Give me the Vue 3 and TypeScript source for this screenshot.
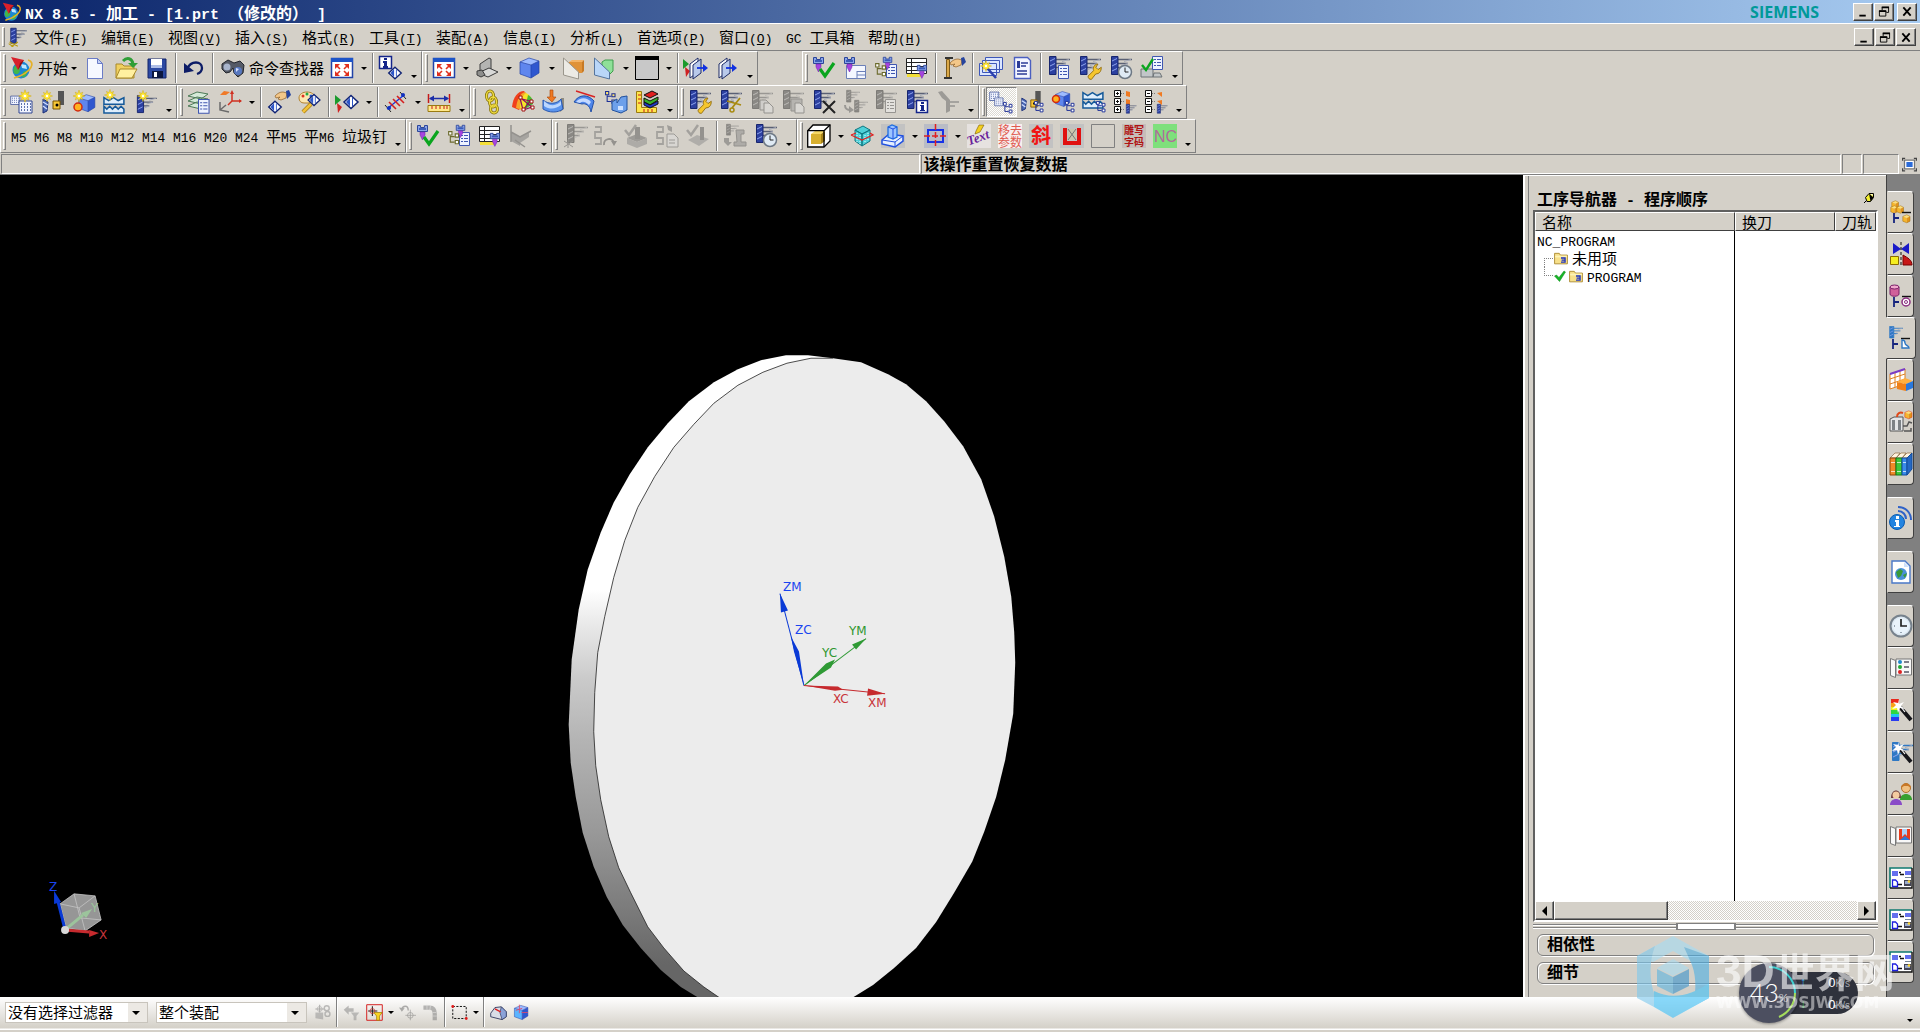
<script setup lang="ts">
import { h } from 'vue'

/* Text helper: western characters are set in a monospaced face, the access key is underlined. */
const Label = (props: { text: string }) =>
  h(
    'span',
    props.text.split(/([\x20-\x7e]+)/).filter(Boolean).map((part) => {
      if (!/^[\x20-\x7e]/.test(part)) return part
      const key = part.match(/^\((.)\)$/)
      return h('span', { class: 'latin' }, key ? ['(', h('u', key[1]), ')'] : part)
    }),
  )
Label.props = ['text']

const cellWidth = (text: string) =>
  [...text].reduce((sum, c) => sum + (c.charCodeAt(0) < 128 ? 8 : 15), 0) + 'px'

/* ---- icon parts, drawn in a 24 x 24 box ---- */
const at = (part: string, x: number, y: number, s = 1) => `<g transform="translate(${x} ${y}) scale(${s})">${part}</g>`

const mill =
  '<path stroke="#5a6074" stroke-width="1.4" d="M9 3.5h14M9 7.5h10M9 11.5h6"/><path stroke="#a4a9b8" d="M15 5.500l7-2M12 9.500l7-2M10 13.500l5-2"/><path fill="#2c40a0" stroke="#18266e" d="M2.500.500h6.500v18H2.500z"/><path stroke="#8fa4ee" stroke-width="1" d="M3 5l5-2.500M3 10l5-2.500M3 15l5-2.500"/>'
const star =
  '<path fill="#ffe838" stroke="#c9a200" stroke-width=".5" d="M0-7L1.3-3 4.5-4.5 3-1.3 7 0 3 1.3 4.5 4.5 1.3 3 0 7-1.3 3-4.5 4.5-3 1.3-7 0-3-1.3-4.5-4.5-1.3-3z"/><circle r="1.5" fill="#fff"/>'
const holder =
  '<path fill="#8aa4ea" stroke="#2c469a" d="M1.5 1.5h3v2h4v-2h3v6h-10z"/><path fill="#3a5cb8" d="M3 4h7v2H3z"/><path fill="#a545e0" stroke="#6a1fa0" stroke-width=".5" d="M4 8h5v3l-2.5 5L4 11z"/>'
const check = '<path fill="none" stroke="#0aa51e" stroke-width="3.2" d="M8 13l5 7L22 7"/>'
const tree = '<path fill="#fff" stroke="#1c2e96" d="M1.5 1.5h3v3h-3zM7.5 3.5h3v3h-3zM7.5 9.5h3v3h-3z"/><path fill="none" stroke="#1c2e96" d="M3 5v6h4M3 6h4"/>'
const clock = '<circle r="6.5" fill="#dfeaf4" stroke="#6d7884" stroke-width="1.5"/><path fill="none" stroke="#222" d="M0-4.5V0h3.5"/>'
const wrench = '<path fill="#f5c62e" stroke="#8f6a0c" stroke-width=".8" d="M1 11l5-5c-1-3 1-6 4-6L8 3l2 2 3-2c0 4-2 6-5 6l-4 5c-2 0-3-1-3-3z"/>'
const sheet = '<path fill="#eef3ff" stroke="#4057b0" d="M.5.5h10v13H.5z"/><path stroke="#4057b0" d="M2 3.5h2M5 3.5h4M2 6.5h2M5 6.5h4M2 9.5h2M5 9.5h4"/>'
const gem = '<path fill="#fff" stroke="#0f2274" stroke-width="1.5" d="M0-6.5L7 0 0 6.5-7 0z"/><path fill="#2c55c8" d="M-1-4.500V4.500L-5 0zM1-4V4L2 4V-4z"/>'
const wand = '<path stroke="#15151a" stroke-width="4" d="M11 9l11 13"/><path stroke="#fff" stroke-width="1.2" d="M12 9l4 5"/><path fill="#fff" d="M9 1l1 5 5-2-3 4 4 3-5-1-2 5-1-5-5 1 4-4-3-3 5 1z"/>'
const cube = '<path fill="#9dbbff" d="M2 6l9-4 10 3-8 4z"/><path fill="#5f86ee" d="M2 6l11 3v13L2 18z"/><path fill="#2f57cf" d="M13 9l8-4v12l-8 5z"/><path fill="none" stroke="#2444a8" stroke-width=".7" d="M2 6l9-4 10 3v12l-8 5-11-4zM2 6l11 3 8-4M13 9v13"/>'
const goldBox = '<path fill="#ffe07a" d="M1 3l5-2 4 2-4 2z"/><path fill="#f7b62b" d="M1 3l5 2v6L1 9z"/><path fill="#e1941a" d="M6 5l4-2v6l-4 2z"/><path fill="none" stroke="#9c6608" stroke-width=".6" d="M1 3l5-2 4 2v6l-4 2-5-2z"/>'
const hand = '<path fill="#f3c789" stroke="#8d5d25" stroke-width=".7" d="M0 5c3-3 5-4 8-4l4 1-1 5-5 2-3-1 2-2-4 1z"/><path fill="#27449e" d="M11 0l3-1 2 5-4 4z"/>'
const frame = '<path fill="#fff" stroke="#2143a8" stroke-width="1.5" d="M1.5 2.5h21v19h-21z"/><path fill="#1d54c8" d="M1 2h22v4H1z"/>'
const folderBook = '<path fill="#f8f8f8" stroke="#777" d="M1.5 2.5l5 2v17l-5-2zM7 3h15.5v16H7z"/>'
const plusRow = (y: number, sign: string, tip: string) =>
  `<path fill="#fff" stroke="#111" d="M1.5 ${y + 0.5}h6v6h-6z"/><path stroke="#111" d="${sign}"/><path stroke="#777" stroke-dasharray="1 1" d="M8 ${y + 3.5}h4"/>${tip}`
const layout = '<path fill="#fff" d="M1 2h22v20H1z"/><path fill="none" stroke="#0f7a70" stroke-width="1.6" d="M1 22V2h22"/><path fill="none" stroke="#111" stroke-width="1.4" d="M1 22h22V2"/><path fill="#6470ee" d="M3 5h6v5H3zM16 5h6v4h-6z"/><path stroke="#111" stroke-width="1.4" d="M10 6.5h2M11 8.500h4M9 18.500h4"/><path stroke="#789" d="M16 11.5h6"/><path fill="#fff" stroke="#1f20e0" stroke-width="1.3" d="M3.5 14h3l2 2v4.500h-5z"/><path fill="#445" d="M15 14h7v6h-7z"/><path fill="#9ac" d="M16 15h5v3h-5z"/><circle cx="20" cy="15.5" r="1.300" fill="#ffd62e"/>'
const planeArrow = '<path fill="#fff" stroke="#1c2b66" d="M6 8l8-6v14l-8 6z"/><path fill="#b9c9ea" stroke="#1c2b66" d="M9 9l8-6v14l-8 6z"/><path stroke="#1030e0" stroke-width="1.8" d="M13 12h8"/><path fill="#1030e0" d="M19 8l5 4-5 4z"/>'
const flags = '<path fill="#1c9a2c" d="M0 2l6 5-6 5z"/><path fill="#d02222" d="M2 10l5 4-4 6z"/>'
const schedule = '<path fill="#fff" stroke="#222" d="M1.5 2.5h20v15h-20z"/><path stroke="#222" d="M1 6.5h21M1 10.5h21M1 14.5h21M6.5 2v16"/><path fill="#f4df38" d="M2 18h14v3H2z"/>'
const pathLine = '<path fill="none" stroke="#7a766c" stroke-width="1.8" d="M2 3h6v5H2v6h6v6H2"/>'
const dots = '<path fill="#f2f5ff" stroke="#2e4590" d="M1 3h13v12H1z"/><path stroke="#2e4590" stroke-dasharray="1 2" stroke-width="1.4" d="M3 6h10M3 9h10M3 12h10"/>'
const drill = '<path fill="#4b69b5" stroke="#1c2f78" d="M2 9l5 3-1 9-4 2z"/><path stroke="#cfdcff" stroke-width="1.4" d="M2 12l5 3M2 16l4 3"/><path fill="#555" d="M17 1h6v14h-4l-2-4z"/><path fill="#f7c636" stroke="#7a5500" d="M12 11h7v8h-7z"/><circle cx="16" cy="15" r="1.5"/>'
const zigzag = '<path fill="#dfeefc" stroke="#165a9a" stroke-width="1.6" d="M1 6l5 3 5-3 5 3 6-3v7H1z"/><path fill="#dfeefc" stroke="#165a9a" stroke-width="1.6" d="M1 15l3 3 3-3 3 3 3-3 3 3 3-3 3 3v4H1z"/>'
const navTree = '<path fill="none" stroke="#16247e" stroke-width="1.8" d="M5 13v10M5 18h5"/><path stroke="#111" stroke-width="1.4" d="M13 12.5h9"/>'
const teal = (part: string) => part.replace(/#2c40a0|#18266e|#5a6074/g, '#2f78c4')

const icons: Record<string, string> = {
  nx: '<circle cx="11" cy="14" r="8.5" fill="#1b86d6"/><path fill="#43b649" d="M4 11c3-3 6-1 6 2s-1 5-4 5-3-4-2-7zM13 16l5-2-2 6-4 2z"/><path fill="#bfe6ff" d="M11 8l5 1 1 4-5-1z"/><path fill="#d8202a" d="M1 1l13 3-6 10z"/><path fill="#8c0f16" d="M8 14l6-10-4 3z"/><path fill="none" stroke="#e5b128" stroke-width="1.8" d="M18 4c8 2 4 13-14 18"/>',
  machining: at(mill, 2, 1) + '<path fill="none" stroke="#b89a10" stroke-width="1.3" d="M2 20l6 4M13 18l-8 6M3 18l10 5"/>',
  newdoc: '<path fill="#f6f8ff" stroke="#6b7cc6" d="M4.5 2.5h10l5 5v15h-15z"/><path fill="#c3d0f6" stroke="#6b7cc6" d="M14.5 2.5v5h5z"/>',
  open: '<path fill="#f0d060" stroke="#a8892a" d="M2 8h6l2 2h10v12H2z"/><path fill="#fff0a0" stroke="#a8892a" d="M2 22l4-9h17l-5 9z"/><path fill="none" stroke="#2f9e37" stroke-width="3" d="M9 5c4-4 9-3 10 3"/><path fill="#2f9e37" d="M14 7h10l-5 5z"/>',
  save: '<path fill="#2b48a2" stroke="#15256a" d="M3 3h18v19H3z"/><path fill="#fff" d="M6 3h11v9H6z"/><path fill="#aebde6" d="M6 9h11v3H6z"/><path fill="#0c1740" d="M7 15h11v7H7z"/><path fill="#fff" d="M9 16h3v5H9z"/>',
  undo: '<path fill="none" stroke="#0d1c66" stroke-width="2.3" d="M5 13C9 4 20 5 20 12c0 3-2 5-5 6"/><path fill="#0d1c66" d="M2 7v10l10-2z"/>',
  binoc: '<path fill="#555a66" stroke="#22252c" d="M1 8l6-4 6 3 6-2 4 4-1 8-5 4-4-4-1-5-3 4-4 1-4-4z"/><circle cx="6" cy="11" r="3.5" fill="#a8b4cc"/><circle cx="17" cy="15" r="4" fill="#5878c0"/><path fill="#d7e2ff" d="M15 12l3 1-3 3z"/>',
  fit: frame + '<path fill="#e0301e" d="M5 8h5l-5 5zM19 8v5l-5-5zM5 20v-5l5 5zM19 20h-5l5-5z"/><path stroke="#e0301e" stroke-width="1.6" d="M6 9l4 4M18 9l-4 4M6 19l4-4M18 19l-4-4"/>',
  info: '<path fill="#fff" stroke="#14258a" stroke-width="1.5" d="M.5.5h12v12H.5z"/><path fill="#14258a" d="M5 2h3v2H5zM4 5h4v5h1v2H4v-2h1V7H4z"/>' + at(gem, 16, 17, 0.9),
  hinge: '<path fill="#b4b4b2" stroke="#3c3c3c" d="M5 8l9-6 2 1v10L5 18z"/><path fill="#d9d9d7" stroke="#3c3c3c" d="M3 17l11-5 9 4-10 5z"/><path fill="#8e8e8c" stroke="#3c3c3c" d="M2 15l5-1 3 5-4 2-4-2z"/>',
  cube,
  clipOrange: '<path fill="#e09238" d="M8 6h13v11H8z"/><path fill="#f3b366" d="M8 6l3-2h12l-2 2z"/><path fill="#c87a24" d="M21 6l2-2v11l-2 2z"/><path fill="#eceae4" stroke="#9a968c" d="M2.5 2v17l15 4V16z"/>',
  clipGreen: '<path fill="#8fe098" stroke="#3f9c4c" d="M10 6l3-2h8v11l-4 4h-7z"/><path fill="#b9d6f8" stroke="#55759e" d="M2.5 2v17l15 4V16z"/>',
  square: '<path fill="#c8c8c8" stroke="#000" d="M.5.5h23v23H.5z"/><path d="M0 0h24v4H0z"/>',
  clipOn: at(flags, -1, 1) + planeArrow,
  clipEdit: at(planeArrow, -2, 0),
  verify: holder + check,
  holderNote: '<path fill="#f4f7ff" stroke="#6c80b8" d="M3.5 9.5h19v13h-19z"/><path stroke="#6c80b8" d="M14 15.5h8M14 19h8M14 15v7"/>' + holder,
  holderTree: at(sheet, 12, 8) + at(holder, 8, 0, 0.85) + at(tree.replace(/#1c2e96/g, '#6b6a2c'), 0, 6, 1.1),
  holderTable: schedule + at(holder, 11, 8, 0.9),
  probe: '<path fill="#dba94a" stroke="#7c5a1a" d="M4.5 3.5h3v18h-3z"/><path fill="#333" d="M2 21h8v2H2zM3 1h8v2H3z"/>' + at(hand, 8, 2),
  wizard: '<path fill="#dbe6ff" stroke="#3e57b8" d="M6.5 1.5h17v12h-17zM3.5 4.5h17v12h-17zM.5 7.5h17v12H.5z"/>' + at(star, 7, 10, 0.8) + '<path stroke="#2b3fae" stroke-width="2.5" d="M9 13l8 9"/>',
  report: '<path fill="#f2f5ff" stroke="#4b5fc0" stroke-width="1.4" d="M4.5 1.5h13l3 3v18h-16z"/><path fill="#2b3b96" d="M7 5h3v7H7z"/><path stroke="#2b3b96" stroke-width="1.5" d="M11 7h7M11 10h5M7 15h10M7 18h10"/>',
  millList: mill + at(sheet, 11, 9),
  millWrench: mill + at(wrench, 9, 8, 1.1),
  millClock: mill + at(clock, 16, 16),
  post: '<path fill="#c2c6c8" stroke="#6c7276" d="M1 13h12v8H1zM14 17h6l2 4h-9z"/>' + at(sheet, 12, 0) + '<path fill="none" stroke="#0aa51e" stroke-width="2.4" d="M2 9l4 5 7-11"/>',
  newProgram: at(dots, 0, 4, 0.7) + at(dots, 8, 8) + at(star, 15, 6, 0.9),
  newTool: drill + at(star, 6, 6, 0.8),
  newGeometry: at(cube, 5, 3, 0.85) + '<circle cx="6" cy="17" r="4" fill="#ffb21e" stroke="#d22a10" stroke-width="1.5"/>' + at(star, 7, 6, 0.85),
  newMethod: at(zigzag, 0, 2, 0.95) + at(star, 7, 5, 0.8),
  newOperation: at(mill, 1, 5, 0.95) + at(star, 9, 6, 0.8),
  layers: '<path fill="#d5ead8" stroke="#4d7a58" d="M1 6l9-4 11 2-7 5zM1 11l9-4 11 2-7 5zM1 16l9-4 11 2-7 5z"/>' + at(sheet, 11, 9, 1.05),
  csys: '<path fill="#f07a28" d="M2 5l4-4 6 1-4 3z"/><path fill="none" stroke="#d03020" stroke-width="1.5" d="M14 2v9h9M14 11l-4 4"/><path fill="none" stroke="#6b6b6b" stroke-width="1.5" d="M2 12v8l9 2M2 20l6-5"/><path fill="#d03020" d="M12 4l2-4 2 4zM21 9l3 2-3 2z"/>',
  gemHand: at(gem, 8, 17, 0.9) + at(hand, 8, 1),
  palette: '<path fill="#fbe6b0" stroke="#b08030" d="M1 8c0-8 16-8 16 0 0 4-5 3-6 5H6C3 13 1 11 1 8z"/><circle cx="5" cy="6" r="1.5" fill="#d32"/><circle cx="9" cy="4" r="1.5" fill="#2a4"/><circle cx="13" cy="6" r="1.5" fill="#25c"/><path fill="none" stroke="#a87c14" stroke-width="4" d="M13 14l-8 8"/><path fill="none" stroke="#f2c23a" stroke-width="2.5" d="M13 14l-8 8"/>' + at(gem, 16, 10, 0.85),
  gemFlag: at(flags, 0, 3) + at(gem, 16, 12),
  measure: '<path stroke="#222" d="M1 15l6 7M16 2l6 7"/><path stroke="#1030e0" stroke-width="1.2" d="M3 19L20 5"/><path stroke="#d42020" stroke-width="1.6" d="M5 12l7 7M9 9l7 7M13 6l7 7"/><circle cx="5" cy="18" r="2" fill="#1030c0"/><circle cx="19" cy="5" r="2" fill="#1030c0"/>',
  ruler: '<path stroke="#c41a1a" stroke-width="1.5" d="M1.5 4v9M22.5 4v9"/><path stroke="#1c2ea8" stroke-width="1.5" d="M3 8.5h18"/><path fill="#1c2ea8" d="M2 8.5l5-3v6zM22 8.5l-5-3v6z"/><path fill="#ffe88a" stroke="#9a7a10" d="M1 15.5h22v6H1z"/><path stroke="#c41a1a" d="M5 16v3M9 16v3M13 16v3M17 16v3M20 16v3"/>',
  chain: '<g fill="none" stroke="#8a780c" stroke-width="3"><ellipse cx="10" cy="6" rx="3.5" ry="5"/><ellipse cx="13" cy="12" rx="3.5" ry="5"/><ellipse cx="14" cy="19" rx="3.5" ry="4"/></g><g fill="none" stroke="#f0dc40" stroke-width="1.4"><ellipse cx="10" cy="6" rx="3.5" ry="5"/><ellipse cx="13" cy="12" rx="3.5" ry="5"/><ellipse cx="14" cy="19" rx="3.5" ry="4"/></g>',
  rainbow: '<path fill="#f0401c" d="M1 17C2 7 7 1 13 1l4 5-9 14z"/><path fill="#f7a52a" d="M5 18C6 10 9 3 14 2l3 4-6 14z"/><path fill="#f7e52a" d="M9 18c0-6 3-14 6-15 4 2 5 4 6 7l-7 9z"/><path fill="#48b838" d="M17 5c4 2 5 5 5 9l-8 5z"/><path fill="none" stroke="#8a1060" stroke-width="1.2" d="M9 8l3 12 9-3-10-8 8 2-6 8"/><path fill="#fff" stroke="#a01010" d="M8 6h3v3H8zM11 18h3v3h-3zM19 10h3v3h-3zM20 16h3v3h-3z"/>',
  surfaceBlue: '<path fill="#8f8b80" d="M19 8h3v11l-4 3z"/><path fill="#5a94ee" stroke="#2a58b0" d="M1 10c6 5 14 4 18-1l2 10c-5 4-14 4-20 0z"/><path fill="#bcd7ff" d="M2 11c6 6 13 5 17 0v4c-5 4-11 5-17 1z"/><path fill="#f07a22" stroke="#a84408" stroke-width=".6" d="M8 0h3v7h3l-4 5-5-5h3z"/>',
  surfaceTop: '<path fill="#4f86ea" stroke="#2350a8" d="M1 12C6 4 15 4 21 11l-3 11c-1-7-6-9-9-8z"/><path fill="#c4d9ff" d="M3 12c4-5 11-5 15 0l-2 3c-4-4-7-4-9-2z"/><path stroke="#d82222" stroke-width="1.4" d="M3 1l19 6"/>',
  solidTree: at(tree.replace(/#fff/, '#ffe36a'), 0, 0, 1.05) + '<path fill="#6da0ea" stroke="#22509c" d="M8 12l5-3v4l4-6 6-1v14l-6 3-9-3z"/><path fill="#cfe2ff" d="M14 16h5v4h-5z"/>',
  rulerBooks: '<path fill="#ffe64c" stroke="#9a7a10" d="M1.5 1.5h5v16h15v5h-20z"/><path stroke="#c41a1a" d="M3 5h3M3 9h3M3 13h3M9 19v3M13 19v3M17 19v3"/><path fill="#e02020" stroke="#111" d="M9 5l8-4 6 3-8 4z"/><path fill="#38b028" stroke="#111" d="M9 8l6 3 8-4v3l-8 5-6-3z"/><path fill="#2038c8" stroke="#111" d="M9 12l6 3 8-4v3l-8 4-6-3z"/>',
  millCut: mill + '<path fill="none" stroke="#a88a10" stroke-width="1.8" d="M8 11l14 4M21 8l-8 10"/><circle cx="13" cy="20" r="2" fill="none" stroke="#a88a10" stroke-width="1.5"/>',
  millCopy: mill + '<path fill="#c8ccd8" stroke="#555" d="M10 10h6l3 3v7h-9z"/><path fill="#dde" stroke="#555" d="M14 13h5l4 4v6h-9z"/>',
  millPaste: mill + '<path fill="#b09a60" stroke="#555" d="M10 9h11v12H10z"/><path fill="#dde" stroke="#555" d="M14 13h5l4 4v6h-9z"/>',
  millDelete: mill + '<path stroke="#222" stroke-width="2" d="M11 11l12 12M23 11L11 23"/>',
  millSwap: at(mill, 2, 0, 0.65) + at(mill, 10, 10, 0.65) + '<path fill="none" stroke="#8a5a30" stroke-width="2" d="M2 15c0 4 2 5 6 5"/><path fill="#8a5a30" d="M6 16l5 4-5 3z"/>',
  millInfo: mill + '<path fill="#fff" stroke="#14258a" stroke-width="1.5" d="M11.5 10.5h11v12h-11z"/><path fill="#14258a" d="M16 12h3v2h-3zM15 15h4v5h1v1h-5v-1h1v-4h-1z"/>',
  millTilt: '<path fill="#666" d="M2 2l4-1 8 9v11l-4 2V11L6 8z"/><path stroke="#777" stroke-width="2" d="M14 12h9M14 16h5"/>',
  viewProgram: at(dots, 0, 0, 0.7) + at(dots, 5, 6, 0.65) + at(tree, 13, 11, 0.95),
  viewTool: at(drill, 0, 0, 0.9) + at(tree, 13, 10, 0.95),
  viewGeometry: at(cube, 3, 0, 0.75) + '<circle cx="5" cy="9" r="3.5" fill="#ffb21e" stroke="#d22a10" stroke-width="1.5"/>' + at(tree, 13, 10, 0.95),
  viewMethod: at(zigzag, 0, -3, 0.95) + at(tree, 13, 10, 0.95),
  expand: plusRow(0, 'M4.5 2v3M3 3.5h3', '<path fill="#f07a22" d="M13 1l4 1v5l-4-1z"/>') + plusRow(8, 'M4.5 10v3M3 11.5h3', '<path fill="#f07a22" d="M13 9l4 1v5l-4-1z"/>') + plusRow(16, 'M4.5 18v3M3 19.5h3', '') + at(mill, 12, 14, 0.5),
  collapse: plusRow(0, 'M3 3.5h3', '<path fill="#f07a22" d="M18 7V2l-5 1z"/>') + plusRow(8, 'M3 11.5h3', '<path fill="#f07a22" d="M18 15v-5l-5 1z"/>') + plusRow(16, 'M3 19.5h3', '') + at(mill, 12, 14, 0.5),
  axesGrey: '<path fill="#7b7a70" d="M2 8l9 5v9l-9-5zM11 13l9-5v5l-9 6z"/><path fill="none" stroke="#555" stroke-width="1.5" d="M2 18V1M2 8l9 5 11-6M6 16l10 7"/>',
  generate: at(mill, 3, 0) + '<path fill="none" stroke="#6a5a20" d="M2 17l9 6M11 17l-9 6M6 16v8"/>',
  replay: pathLine + '<path fill="none" stroke="#555" stroke-width="2" d="M11 21c-1-7 9-8 10-2"/><path fill="#555" d="M18 17h6l-3 5z"/>',
  verifyPart: '<path fill="#a35b2c" d="M3 14l10-4 10 4-10 4z"/><path fill="#9a8a30" d="M3 14l10 4v6L3 20zM13 18l10-4v6l-10 4z"/><path fill="#556" d="M11 3h5v12h-5z"/><path fill="none" stroke="#2c8f30" stroke-width="2.5" d="M1 6l4 5 7-10"/>',
  listPath: pathLine + '<path fill="#ddd" stroke="#666" d="M12 10h7l4 4v9H12z"/><path stroke="#666" d="M14 16h6M14 19h6"/><path fill="#c05a20" d="M12 1l5 2v5l-4-2z"/>',
  confirm: '<path fill="#8f8c80" d="M2 16l9-5 12 4-10 7z"/><path fill="#556" d="M14 3h4v13h-4z"/><path fill="none" stroke="#2c8f30" stroke-width="2.5" d="M1 6l4 5 7-10"/>',
  machine: at(mill, 2, 0, 0.6) + '<path fill="#888" stroke="#555" d="M13 6h8v4h-3v8h5v4H11v-4h3z"/><path fill="#b05a20" d="M1 14h5v4h3l-4 4-4-4z"/>',
  goldCage: '<path fill="#fff" stroke="#000" stroke-width="1.3" d="M.7 6.7L6 1h17v16l-6 6H.7z"/><path fill="#f6d866" d="M4 10l4-3h10l-4 3z"/><path fill="#d8b030" d="M4 10h10v10H4z"/><path fill="#a88418" d="M14 10l4-3v10l-4 3z"/><path fill="none" stroke="#000" stroke-width="1.3" d="M.7 6.7H17V23M17 6.7L23 1"/>',
  cyanBox: '<path fill="#4fd0d8" stroke="#0f7680" d="M5 6l8-4 7 4-8 4zM5 6v11l7 5V10zM12 10v12l8-5V6z"/><path stroke="#dffcff" stroke-dasharray="1 1" d="M7 9v9M10 11v9M15 11v8M18 9v8"/><path fill="none" stroke="#e02020" stroke-width="1.3" d="M1 11l5-2M20 9l3 2-11 5-11-5"/>',
  blockBlue: '<path fill="#c2c2c2" d="M0 0h24v24H0z"/><path fill="#e5eeff" stroke="#1f4fe0" stroke-width="1.5" d="M1 16l7-6 14 2v5l-8 6-13-3z"/><path fill="#9cc4ff" stroke="#1f6fe0" stroke-width="1.3" d="M7 3l4-2 5 2v10l-4 2-5-2z"/><path fill="none" stroke="#1f4fe0" d="M7 3l5 2 4-2M12 5v10M1 16l13 2 8-6M14 18v5"/>',
  crosshair: '<path fill="#b9bcc6" d="M0 0h24v24H0z"/><path fill="none" stroke="#1832e8" stroke-width="2" d="M4 6h15v12H4z"/><path stroke="#e02020" stroke-width="1.5" stroke-dasharray="6 2" d="M11.5 0v24M0 12h24"/>',
  textTool: '<path fill="#e6e2e0" d="M0 0h24v24H0z"/><text x="0" y="19" font-family="Liberation Serif" font-size="13" font-weight="700" font-style="italic" fill="#6a1f9a" transform="rotate(-20 8 15)">Text</text><path fill="#f4d020" stroke="#7a5a00" stroke-width=".6" d="M9 7l3-6h5l-4 7-5 2z"/>',
  removeParams: '<path fill="#f7efee" d="M0 0h24v24H0z"/><g font-family="Noto Sans CJK SC" font-size="12" fill="#e05a50"><text x="0" y="11">移去</text><text x="0" y="23">参数</text></g>',
  slant: '<path fill="#c2c2c2" d="M0 0h24v24H0z"/><text x="2" y="19" font-family="Noto Sans CJK SC" font-size="20" font-weight="700" fill="#f01414">斜</text>',
  cup: '<path fill="#c2c2c2" d="M0 0h24v24H0z"/><path fill="none" stroke="#e01010" stroke-width="4" d="M5 4v15h14V4"/><path fill="#c9c5ae" d="M8 5h8v11H8z"/><path stroke="#777" d="M8 5l8 11M16 5L8 16"/>',
  blank: '<path fill="#d4d0c8" stroke="#808080" d="M.5.5h23v23H.5z"/>',
  engrave: '<path fill="#c6bdb9" d="M0 0h24v24H0z"/><g font-family="Noto Sans CJK SC" font-size="10" font-weight="700" fill="#b01212"><text x="2" y="10">雕写</text><text x="2" y="22">字码</text></g>',
  nc: '<path fill="#7ee07c" d="M0 0h24v24H0z"/><text x="1" y="18" font-family="Liberation Sans" font-size="16" fill="#b06a9a">NC</text>',
  /* selection bar */
  pick: '<path fill="#8f8f88" d="M2 12h11v10l-11-2z"/><path fill="none" stroke="#8a5a5a" stroke-width="1.5" d="M8 1v11M2 7h12"/><circle cx="8" cy="7" r="3.5" fill="none" stroke="#777"/><circle cx="18" cy="6" r="3.5" fill="none" stroke="#9a8440" stroke-width="2"/><circle cx="19" cy="14" r="3.5" fill="none" stroke="#9a8440" stroke-width="2"/>',
  back: '<path fill="#4e8e96" d="M1 8l7-6v4h7v5H8v4z"/><path fill="#a88a40" d="M11 12h12l-4 5v6h-4v-6z"/>',
  filter: '<path fill="none" stroke="#d42020" stroke-width="1.4" d="M1 1h22v22H1z"/><path stroke="#222" stroke-width="1.5" d="M9 3v14M3 10h13"/><circle cx="9" cy="10" r="3.5" fill="none" stroke="#c22"/><path fill="#f8d420" stroke="#a07800" d="M11 12h12l-4 5v6h-4v-6z"/>',
  rotateBack: '<path fill="none" stroke="#666" stroke-width="2" d="M4 8c1-6 9-7 9 1"/><path fill="#666" d="M0 5l8 1-4 5z"/><circle cx="16" cy="16" r="4" fill="none" stroke="#944"/><path stroke="#944" d="M16 8v15M9 16h15"/>',
  hose: '<path fill="none" stroke="#777" stroke-width="6" d="M2 5h9c5 0 7 4 7 9v9"/><path stroke="#ccc" d="M7 1v7M12 2l-1 7M20 12h-5M21 17h-6"/>',
  marquee: '<path fill="none" stroke="#111" stroke-width="1.4" stroke-dasharray="3 2" d="M2.5 3.5h19v17h-19z"/><circle cx="2.5" cy="3.5" r="2" fill="#e01818"/><circle cx="21.5" cy="20.5" r="2" fill="#e01818"/>',
  shaded: '<path fill="#d9dde6" stroke="#333b60" stroke-width="1.3" d="M1 13l6-8 9-1 7 7v7l-6 4-16-4z"/><path fill="#8ba2d8" stroke="#333b60" d="M14 12l2-8 7 7v7l-6 4z"/><path stroke="#e02020" stroke-width="2" d="M7 7l8 4"/>',
  cubeMark: cube.replace('#5f86ee', '#5ab4ff') + '<path fill="none" stroke="#e04a6a" stroke-width="1.2" d="M9 1v12M4 9l9-3M12 12h9"/>',
  /* resource tabs */
  assembly: at(goldBox, 2, 0, 0.75) + at(goldBox, 1, 5, 0.75) + at(goldBox, 7, 5, 0.75) + navTree + at(goldBox, 13, 14, 0.8),
  constraint: '<path fill="#1a1ac8" d="M4 1l8 6-8 5zM20 1l-8 6 8 5z"/><path stroke="#111" stroke-dasharray="3 2" d="M12 0v24"/><path fill="#f5ee20" stroke="#8a6a00" d="M1.5 14.5h8v8h-8z"/><path fill="#c81818" stroke="#700" d="M14 13v10h9c0-5-4-7-9-10z"/>',
  part: '<path fill="#d0609a" stroke="#7a1f68" d="M1 3v7c0 3 9 3 9 0V3"/><ellipse cx="5.5" cy="3" rx="4.5" ry="2" fill="#f0a8cc" stroke="#7a1f68"/>' + navTree + '<circle cx="17" cy="18" r="4" fill="#fff" stroke="#8a2f80" stroke-width="1.5"/><circle cx="17" cy="18" r="1.5" fill="none" stroke="#8a2f80"/>',
  operation: teal(at(mill, 0, 0, 0.65)) + navTree + '<path fill="#fff" stroke="#2f78c4" stroke-width="1.4" d="M14 14v8h7c0-3-4-2-4-5 0-2-1-3-3-3z"/>',
  gridBox: '<path fill="#fff" stroke="#e08020" d="M1 6l15-5v15L1 21zM1 11l15-5M1 16l15-5M6 4v15M11 3v14"/><path stroke="#7a3cc8" stroke-width="2" d="M1 6l15-5"/><path fill="#ffb040" d="M8 14l8-4 8 3-7 3z"/><path fill="#f08018" d="M8 14l9 2v7l-9-2z"/><path fill="#2a78dc" d="M17 16l7-3v7l-7 3z"/>',
  machineBox: '<path fill="#e4e6e8" stroke="#555" d="M1 9l4-2h9v14H1z"/><path fill="#7d8286" d="M3 10h3v10H3zM9 10h3v10H9z"/><path fill="none" stroke="#555" stroke-width="1.5" d="M14 16h4l2-4 3 1M15 21h7v-3"/><path fill="none" stroke="#e04818" stroke-width="2" d="M8 7c0-4 3-5 6-4"/>' + at(goldBox.replace('#9c6608', '#e02a10'), 15, 0, 0.8),
  books: '<path fill="#fff4e0" stroke="#8c6a40" stroke-width=".7" d="M1 6l5-5h5L7 6zM7 6l5-5h5l-4 5zM13 6l5-5h5l-5 5z"/><path fill="#f08a28" stroke="#8c4408" d="M1 6h6v17H1z"/><path fill="#3fc83a" stroke="#0f7a18" d="M7 6h6v17H7z"/><path fill="#3a8cea" stroke="#124c9c" d="M13 6h5v17h-5z"/><path fill="#2468c4" stroke="#124c9c" d="M18 6l5-5v16l-5 6z"/><path stroke="#ffffffb0" d="M2 10.5h4M8 10.5h4M2 19.5h4M8 19.5h4M14 10.5h3M14 19.5h3"/>',
  broadcast: '<circle cx="8" cy="16" r="7.5" fill="#2384e0" stroke="#0c5cb0"/><path fill="#fff" d="M7 10h3v3H7zM6 14h4v6h1v1H5v-1h2v-4H6z"/><path fill="none" stroke="#2f62c8" stroke-width="2" d="M9 5c5 0 8 4 8 8M9 1c8 0 13 6 13 13"/>',
  web: '<path fill="#fff" stroke="#4a78c8" stroke-width="1.4" d="M3 1h13l5 5v17H3z"/><path fill="#cfe0fa" d="M15 2v5h5z"/><circle cx="12" cy="14" r="6" fill="#4a90d8"/><path fill="#3a9a3a" d="M7 12l4-3 3 2-2 5-3 2zM14 15l4-2-2 5z"/>',
  history: '<circle cx="12" cy="12" r="10.5" fill="#dce8f2" stroke="#77828c" stroke-width="2"/><circle cx="12" cy="12" r="8" fill="#e9f3fb"/><path fill="none" stroke="#222" stroke-width="1.7" d="M12 5v7h6"/><path stroke="#456" stroke-dasharray="1 1" d="M5 12h2M12 18v2"/>',
  roles: folderBook + '<circle cx="11" cy="6" r="2" fill="#28c"/><circle cx="11" cy="11" r="2" fill="#2a3"/><circle cx="11" cy="16" r="2" fill="#d22"/><path stroke="#556" stroke-width="1.5" d="M15 6h5M15 11h5M15 16h5"/>',
  spectrum: '<path fill="#e8281c" d="M2 1h8v4H2z"/><path fill="#f8a01c" d="M2 5h8v4H2z"/><path fill="#f0f01c" d="M2 9h8v3H2z"/><path fill="#30d840" d="M2 12h8v4H2z"/><path fill="#20c8f0" d="M2 16h8v3H2z"/><path fill="#2a3cf0" d="M2 19h8v4H2z"/>' + wand,
  millWand: teal(at(mill, 1, 2)) + wand,
  people: '<circle cx="17" cy="6" r="4.5" fill="#f0c080" stroke="#b0702a"/><path fill="#c87828" d="M12 6c0-6 10-6 10 0l-3-2h-4z"/><path fill="#38a030" d="M11 18c0-8 12-8 12 0z"/><path fill="#6a3a3a" d="M2 16c0-10 10-10 10 0z"/><circle cx="7" cy="13" r="3.5" fill="#f4cba0"/><path fill="#8a4cc8" d="M1 23c0-8 12-8 12 0z"/>',
  scene: folderBook + '<path fill="#e83a1c" d="M10 5h11v11H10z"/><path fill="#a8d0f8" d="M13 5h5v7l-2-2-3 3z"/><path fill="#2b78d8" d="M11 16l5-4 5 4z"/>',
  layout,
  /* navigator */
  folder: '<path fill="#f7e08a" stroke="#a8862a" stroke-width="1.5" d="M1 4h8l2 3h12v15H1z"/><path fill="#fdf3b8" d="M2 8h20v3H2z"/><path fill="none" stroke="#1c30c0" stroke-width="2.2" d="M12 12h7v3.5h-6M19 15v4h-7"/>',
  tick: '<path fill="#17b526" stroke="#0a8a18" d="M1 12l4-2 5 5L20 2l3 2-12 19z"/>',
  pin: '<path stroke="#000" stroke-width="2" d="M2 22l5-5"/><path fill="#f3ee30" stroke="#000" stroke-width="2" d="M5 11l7-8h9v8l-6 8H8z"/><path d="M12 3l9 8-6 8z"/><path fill="#fff" d="M15 4h4v4z"/>',
  screen: '<path fill="none" stroke="#444" stroke-width="2" d="M1 6V2h4M19 2h4v4M23 18v4h-4M5 22H1v-4"/><path fill="#fff" stroke="#777" stroke-width="2" d="M4 5h16v14H4z"/><path fill="#2a6ad8" d="M7 8h10v8H7z"/>',
  minimize: '<path d="M4 19h14v4H4z"/>',
  restore: '<path fill="none" stroke="#000" stroke-width="2" d="M8 9V3h14v11h-5M2 11h14v11H2z"/><path d="M7 1h16v4H7zM1 9h16v4H1z"/>',
  close: '<path stroke="#000" stroke-width="4" d="M4 3l16 18M20 3L4 21"/>',
}

interface Tool { icon?: string; label?: string; arrow?: boolean; sep?: boolean; dim?: boolean; on?: boolean }

/* "~" greyed out, "*" pressed, "^" has a drop-down, "|" separator, ":" caption beside the icon */
const tools = (spec: string): Tool[] =>
  spec.split(' ').map((token) => {
    if (token === '|') return { sep: true }
    const [icon, label] = token.replace(/[~*^]/g, '').split(':')
    return { icon, label, arrow: token.includes('^'), dim: token.includes('~'), on: token.includes('*') }
  })

const rows: { apart?: boolean; tools: Tool[] }[][] = [
  [
    { tools: tools('nx:开始^ newdoc open save | undo | binoc:命令查找器 fit^ | info') },
    { tools: tools('fit^ hinge^ cube^ clipOrange clipGreen^ square^ | clipOn clipEdit') },
    { apart: true, tools: tools('verify holderNote holderTree holderTable | probe | wizard report | millList millWrench millClock post') },
  ],
  [
    { tools: tools('newProgram newTool newGeometry newMethod newOperation') },
    { tools: tools('layers csys^ | gemHand palette | gemFlag^ | measure^ ruler') },
    { tools: tools('chain rainbow surfaceBlue surfaceTop solidTree rulerBooks') },
    { tools: tools('millWrench millCut ~millCopy ~millPaste millDelete ~millSwap ~millList millInfo ~millTilt') },
    { tools: tools('*viewProgram viewTool viewGeometry viewMethod expand collapse') },
  ],
  [
    { tools: ['M5', 'M6', 'M8', 'M10', 'M12', 'M14', 'M16', 'M20', 'M24', '平M5', '平M6', '垃圾钉'].map((label) => ({ label })) },
    { tools: tools('verify holderTree holderTable ~axesGrey') },
    { tools: tools('~generate ~replay ~verifyPart ~listPath ~confirm | ~machine millClock') },
    { tools: tools('goldCage^ cyanBox blockBlue^ crosshair^ textTool removeParams slant cup blank engrave nc') },
  ],
]

const menus = ['文件(F)', '编辑(E)', '视图(V)', '插入(S)', '格式(R)', '工具(T)', '装配(A)', '信息(I)', '分析(L)', '首选项(P)', '窗口(O)', 'GC 工具箱', '帮助(H)']
const windowButtons = ['minimize', 'restore', 'close']
const selection = tools('~pick | ~back filter^ ~rotateBack ~hose | marquee^ | shaded cubeMark')
const tabGroups = [
  ['assembly', 'constraint', 'part', 'operation', 'gridBox', 'machineBox', 'books'],
  ['broadcast'],
  ['web'],
  ['history', 'roles', 'spectrum', 'millWand', 'people', 'scene', 'layout', 'layout', 'layout'],
]
const sections = ['相依性', '细节']

/* outline of the disc: the left edge of the front face is shared with the rim */
const edge = '719,998 703,987 683,971 663,948 647,927 630,893 618,868 608,837 600,800 595,766 593,732 594,693 597,653 604,617 613,578 624,541 637,508 654,477 673,448 693,425 713,404 737,386 762,373 786,364 810,359 832,359'
const face = edge + ' 860,363 887,375 905,385 925,402 943,422 962,447 980,480 993,517 1003,557 1010,597 1013,633 1014,663 1012,714 1004,760 995,797 983,832 971,862 953,893 935,922 915,948 893,968 872,985 851,998'
const rim = '568,725 571,660 578,610 587,570 600,533 613,503 629,475 647,448 667,424 688,402 713,383 737,370 760,361 785,356 807,356 832,359 850,998 698,998 680,987 660,970 640,948 622,925 606,897 593,867 582,833 575,797 570,763'
</script>

<template>
  <div class="app">
    <svg class="defs" aria-hidden="true">
      <linearGradient id="rimShade" gradientUnits="userSpaceOnUse" x1="0" y1="590" x2="0" y2="965">
        <stop offset="0" stop-color="#fff" />
        <stop offset=".08" stop-color="#ececec" />
        <stop offset=".24" stop-color="#cacaca" />
        <stop offset=".4" stop-color="#b4b4b4" />
        <stop offset=".65" stop-color="#989898" />
        <stop offset="1" stop-color="#666" />
      </linearGradient>
    </svg>

    <header class="titlebar">
      <svg class="title-icon" viewBox="0 0 24 24" v-html="icons.nx" />
      <h1 class="title"><Label text="NX 8.5 - 加工 - [1.prt （修改的） ]" /></h1>
      <span class="brand">SIEMENS</span>
      <div class="winbtns split">
        <button v-for="b in windowButtons" :key="b" class="winbtn" :aria-label="b"><svg viewBox="0 0 24 24" v-html="icons[b]" /></button>
      </div>
    </header>

    <nav class="menubar">
      <span class="grip" />
      <svg class="menu-icon" viewBox="0 0 24 24" v-html="icons.machining" />
      <button v-for="m in menus" :key="m" class="menu" :style="{ width: cellWidth(m) }"><Label :text="m" /></button>
      <div class="winbtns">
        <button v-for="b in windowButtons" :key="b" class="winbtn" :aria-label="b"><svg viewBox="0 0 24 24" v-html="icons[b]" /></button>
      </div>
    </nav>

    <div v-for="(row, r) in rows" :key="r" class="toolrow">
      <div v-for="(bar, b) in row" :key="b" class="toolbar" :class="{ apart: bar.apart }" role="toolbar">
        <span class="grip" />
        <template v-for="(t, i) in bar.tools" :key="i">
          <span v-if="t.sep" class="sep" />
          <button v-else-if="!t.icon" class="textbtn" :style="{ width: cellWidth(t.label!) }"><Label :text="t.label!" /></button>
          <button v-else class="tool" :class="{ on: t.on, wide: t.label && !t.arrow }" :aria-label="t.icon">
            <svg :class="{ dim: t.dim }" viewBox="0 0 24 24" v-html="icons[t.icon]" />
            <span v-if="t.label" class="caption">{{ t.label }}</span>
          </button>
          <button v-if="t.arrow" class="drop" aria-label="more" />
        </template>
        <button class="drop overflow" aria-label="toolbar options" />
      </div>
    </div>

    <div class="statusbar">
      <div class="cell" />
      <div class="cell message">该操作重置恢复数据</div>
      <div class="cell narrow" />
      <div class="cell medium" />
      <button class="screen" aria-label="full screen"><svg viewBox="0 0 24 24" v-html="icons.screen" /></button>
    </div>

    <main class="work">
      <svg class="viewport" viewBox="0 176 1523 821" preserveAspectRatio="xMinYMin slice">
        <polygon :points="rim" fill="url(#rimShade)" />
        <polygon :points="face" fill="#ececec" />
        <polyline :points="edge" fill="none" stroke="#222" stroke-width=".8" />
        <g class="axis" fill="#0a3ad6" stroke="#0a3ad6">
          <path d="M803 686L779 594" /><path d="M779 594l1 19 7-2zM790 637l8 15 5 34-10-34z" stroke="none" />
        </g>
        <g class="axis" fill="#2f9a35" stroke="#2f9a35">
          <path d="M803 686l62-47" /><path d="M865 639l-10 11-4-5zM803 686l22-22 9-4-4 8z" stroke="none" />
        </g>
        <g class="axis" fill="#c62a2e" stroke="#c62a2e">
          <path d="M803 686l81 8" /><path d="M884 694l-17-5-1 7zM803 686l34 1 5 3-8 1z" stroke="none" />
        </g>
        <g class="axis-text" fill="#1a44f0"><text x="782" y="591">ZM</text><text x="794" y="634">ZC</text></g>
        <g class="axis-text" fill="#2f962f"><text x="848" y="635">YM</text><text x="821" y="657">YC</text></g>
        <g class="axis-text" fill="#c8353a"><text x="832" y="703">XC</text><text x="867" y="707">XM</text></g>

        <path d="M60 904l14-10 21 2 6 24-16 11-19-3z" fill="#969696" />
        <path d="M60 904l14-10 21 2 6 24-16 11-19-3zM60 904l19 4 16-12M79 908l6 23M74 894l6 24 21 2M80 918l-14 10" fill="none" stroke="#c4c4c4" stroke-width=".8" />
        <path d="M65 930l18-15" stroke="#9cc49c" stroke-width="3" /><path d="M92 909l-6 9-5-5z" fill="#9cc49c" />
        <path d="M65 930l-7-28" stroke="#0a3ad6" stroke-width="3" /><path d="M54 891l7 11-7 2z" fill="#0a3ad6" />
        <path d="M65 930l24 2" stroke="#c62a2e" stroke-width="3" /><path d="M99 933l-10 4v-7z" fill="#c62a2e" />
        <circle cx="65" cy="930" r="4" fill="#d8d8d8" />
        <g class="axis-text"><text x="49" y="891" fill="#1a44f0">Z</text><text x="99" y="939" fill="#c8353a">X</text><text x="91" y="912" fill="#9cc49c">Y</text></g>
      </svg>

      <aside class="navigator">
        <div class="nav-title">
          <h2><Label text="工序导航器 - 程序顺序" /></h2>
          <svg class="pin" viewBox="0 0 24 24" v-html="icons.pin" />
        </div>
        <div class="list">
          <table>
            <colgroup><col class="c1"><col class="c2"><col></colgroup>
            <thead><tr><th>名称</th><th>换刀</th><th>刀轨</th></tr></thead>
            <tbody>
              <tr><td><div class="node root"><Label text="NC_PROGRAM" /></div></td><td /><td /></tr>
              <tr><td><div class="node"><i class="branch" /><svg viewBox="0 0 24 24" v-html="icons.folder" /><Label text="未用项" /></div></td><td /><td /></tr>
              <tr><td><div class="node"><i class="branch last" /><svg class="tick" viewBox="0 0 24 24" v-html="icons.tick" /><svg viewBox="0 0 24 24" v-html="icons.folder" /><Label text="PROGRAM" /></div></td><td /><td /></tr>
              <tr class="rest"><td /><td /><td /></tr>
            </tbody>
          </table>
          <div class="hscroll">
            <button class="raised left" aria-label="scroll left" />
            <span class="thumb raised" />
            <span class="track" />
            <button class="raised right" aria-label="scroll right" />
          </div>
        </div>
        <div class="splitter"><span /></div>
        <button v-for="s in sections" :key="s" class="section">{{ s }}</button>
      </aside>

      <div class="tabs">
        <div v-for="(group, g) in tabGroups" :key="g" class="tabgroup">
          <button v-for="(t, i) in group" :key="i" class="tab" :class="{ active: t === 'operation' }" :aria-label="t">
            <svg viewBox="0 0 24 24" v-html="icons[t]" />
          </button>
        </div>
      </div>
    </main>

    <footer class="selbar">
      <div class="combo first"><select aria-label="类型过滤器"><option>没有选择过滤器</option></select></div>
      <div class="combo second"><select aria-label="选择范围"><option>整个装配</option></select></div>
      <template v-for="(t, i) in selection" :key="i">
        <span v-if="t.sep" class="sep" />
        <button v-else class="tool small" :aria-label="t.icon"><svg :class="{ dim: t.dim }" viewBox="0 0 24 24" v-html="icons[t.icon!]" /></button>
        <button v-if="t.arrow" class="drop" aria-label="more" />
      </template>
      <button class="drop overflow end" aria-label="options" />
    </footer>

    <div class="meter">
      <div class="rates">
        <div><b class="up">↑</b><span>0<small>K/s</small></span></div>
        <div><b class="down">↓</b><span>0<small>K/s</small></span></div>
      </div>
      <div class="dial">
        <svg viewBox="0 0 60 60"><path d="M30 4a26 26 0 0 1 26 26" stroke="#3fd0d0" /><path d="M56 30a26 26 0 0 1-16 24" stroke="#a4dc5c" /></svg>
        <span>43<small>%</small></span>
      </div>
    </div>

    <div class="watermark">
      <svg viewBox="0 0 72 82">
        <path fill="#a4dcf4" d="M36 0l36 20-17 6-19-11-20 11-16-6z" />
        <path fill="#7cc8ee" d="M0 20l18-10c-6 16-6 34 0 50l-1 11L0 62z" />
        <path fill="#4cb0e4" d="M72 20v42l-17 9c4-12 5-28 0-42l-8-18z" />
        <path fill="#3cc0f8" d="M17 55c16 8 36 6 55-8v15L36 82 17 71z" />
        <path fill="#a8dcf2" d="M36 23l16 9-16 8-16-8z" /><path fill="#5cb4e0" d="M20 33l16 8v17l-16-8z" /><path fill="#3a94cc" d="M52 33l-16 8v17l16-8z" />
      </svg>
      <div><p class="name"><span>3D</span>世界网</p><p class="url">WWW.3DSJW.COM</p></div>
    </div>
  </div>
</template>

<style>
body { margin: 0; background: #d4d0c8; }
.latin { font-family: "Liberation Mono", monospace; font-size: 13px; line-height: 1; }
h1 .latin, h2 .latin { font-size: 15px; }
</style>

<style scoped>
.app {
  position: relative;
  display: flex;
  flex-direction: column;
  min-height: 100vh;
  background: #d4d0c8;
  color: #000;
  font: 15px/18px "Noto Sans CJK SC", sans-serif;
}
.defs { position: absolute; width: 0; height: 0; }
svg { display: block; flex: none; }
h1, h2, p { margin: 0; font-size: 16px; }
button { padding: 0; border: 0; background: none; color: inherit; font: inherit; white-space: nowrap; }
.dim { filter: grayscale(1); opacity: .5; }

.titlebar { display: flex; align-items: center; height: 23px; padding: 0 3px 0 2px; background: linear-gradient(90deg, #0a246a, #a6caf0); color: #fff; }
.title-icon { width: 20px; height: 20px; margin-right: 3px; }
.title { flex: 1; line-height: 24px; white-space: pre; }
.brand { margin-right: 34px; color: #099; font: bold 16px/22px "Open Sans", sans-serif; }
.winbtns { display: flex; margin-left: auto; gap: 1px; }
.titlebar .winbtns { margin-left: 0; }
.split .winbtn:last-child { margin-left: 2px; }
.winbtn { display: grid; place-items: center; width: 20px; height: 18px; background: #d4d0c8; border: 1px solid; border-color: #fff #404040 #404040 #fff; box-shadow: inset -1px -1px #808080; }
.winbtn svg { width: 12px; height: 11px; }

.menubar { display: flex; align-items: center; gap: 13px; height: 26px; padding-right: 4px; border-top: 1px solid #fff; border-bottom: 1px solid #808080; }
.menubar .grip { margin-right: -13px; height: 20px; }
.menu-icon { width: 20px; height: 20px; margin: 0 -6px 0 2px; }
.menu { text-align: left; }

.grip { flex: none; width: 3px; height: 28px; margin: 0 1px 0 2px; box-sizing: border-box; border: 1px solid; border-color: #fff #808080 #808080 #fff; }
.toolrow { display: flex; height: 34px; }
.toolbar { display: flex; align-items: center; box-sizing: border-box; border: 1px solid; border-color: #fff #808080 #808080 #fff; }
.apart { margin-left: 44px; }
.tool { display: flex; align-items: center; box-sizing: border-box; min-width: 31px; height: 30px; padding: 0 4px 0 3px; }
.tool svg { width: 24px; height: 24px; overflow: visible; }
.tool:has(.caption) { padding-right: 0; }
.tool.wide { padding-left: 5px; padding-right: 3px; }
.caption { padding-left: 4px; }
.on { border: 1px solid; border-color: #808080 #fff #fff #808080; background: repeating-conic-gradient(#fff 0 25%, #dcd9d2 0 50%) 0 0 / 2px 2px; }
.tool.on { padding: 0 3px 0 2px; }
.textbtn { flex: none; text-align: left; margin-left: 7px; }
.grip + .textbtn { margin-left: 4px; }
.textbtn + .overflow { margin-left: 4px; }
.sep { width: 2px; height: 30px; margin: 0 2px; box-sizing: border-box; border-left: 1px solid #808080; border-right: 1px solid #fff; }
.drop { width: 12px; height: 28px; display: grid; place-items: center; flex: none; }
.drop::after { content: ""; border: 3px solid transparent; border-top-color: #000; border-bottom: 0; }
.overflow { width: 14px; align-items: end; padding-bottom: 4px; }

.statusbar { display: flex; gap: 1px; height: 22px; padding: 1px 1px 0; box-sizing: border-box; border-bottom: 1px solid #808080; }
.cell { flex: 1; box-sizing: border-box; height: 20px; border: 1px solid; border-color: #808080 #fff #fff #808080; }
.message { padding-left: 2px; font-weight: bold; font-size: 16px; line-height: 16px; }
.narrow { flex: 0 0 20px; }
.medium { flex: 0 0 36px; }
.screen svg { width: 15px; height: 15px; margin: 0 2px; }

.work { flex: 1; display: flex; min-height: 0; }
.viewport { flex: 1 1 0; min-width: 0; background: #000; }
.axis path { stroke-width: 1; }
.axis-text { font: 12px "DejaVu Sans", sans-serif; }

.navigator { display: flex; flex-direction: column; flex: 0 0 363px; box-sizing: border-box; padding: 0 8px 13px 4px; border-left: 2px solid #fff; border-top: 1px solid #fff; background: linear-gradient(#808080, #808080) 3px 0 / 1px 100% no-repeat; }
.nav-title { display: flex; align-items: center; justify-content: space-between; height: 34px; padding: 10px 3px 0 8px; box-sizing: border-box; }
.nav-title h2 { line-height: 20px; white-space: pre; }
.pin { width: 12px; height: 12px; }
.list { flex: 1; display: flex; flex-direction: column; margin-left: 4px; border: 2px solid; border-color: #606060 #fff #fff #606060; background: #fff; }
table { flex: 1; width: 100%; table-layout: fixed; border-collapse: separate; border-spacing: 0; }
.c1 { width: 200px; }
.c2 { width: 100px; }
th { box-sizing: border-box; height: 19px; padding: 0 0 0 6px; background: #d4d0c8; border: 1px solid; border-color: #fff #404040 #404040 #fff; font-weight: normal; line-height: 16px; text-align: left; }
td { padding: 0; }
td:first-child { border-right: 1px solid #000; }
.rest { height: 100%; }
.node { display: flex; align-items: center; gap: 4px; height: 18px; padding-left: 9px; line-height: 18px; }
.root { padding-left: 2px; }
.node svg { width: 14px; height: 14px; }
.node .tick { width: 12px; height: 12px; margin-right: -1px; }
.branch { align-self: flex-end; width: 9px; height: 9px; box-sizing: border-box; margin-right: -3px; border: 1px dotted #808080; border-width: 1px 0 0 1px; }
.branch.last { align-self: flex-start; border-width: 0 0 1px 1px; }
.hscroll { display: flex; height: 19px; background: repeating-conic-gradient(#fff 0 25%, #d4d0c8 0 50%) 0 0 / 2px 2px; }
.raised { box-sizing: border-box; background: #d4d0c8; border: 1px solid; border-color: #fff #404040 #404040 #fff; box-shadow: inset -1px -1px #808080; }
.left, .right { display: grid; place-items: center; width: 19px; }
.left::after, .right::after { content: ""; border: 5px solid transparent; }
.left::after { border-right-color: #000; border-left: 0; }
.right::after { border-left-color: #000; border-right: 0; }
.thumb { width: 114px; }
.track { flex: 1; }
.splitter { display: grid; place-items: center; height: 7px; margin: 1px 0 4px 4px; background: linear-gradient(#d4d0c8 1px, #808080 1px 2px, #fff 2px 3px, #d4d0c8 3px 4px, #808080 4px 5px, #fff 5px 6px, #d4d0c8 6px); }
.splitter span { width: 60px; height: 7px; background: #fff; border: 1px solid #808080; border-width: 1px 2px; box-sizing: border-box; }
.section { height: 22px; margin: 0 4px 6px 8px; padding: 0 0 4px 9px; border: 1px solid #808080; border-radius: 6px; box-shadow: 1px 1px #fff, inset 1px 1px #fff; font-weight: bold; font-size: 16px; line-height: 16px; text-align: left; box-sizing: border-box; }
.section:last-child { margin-bottom: 0; }

.tabs { flex: 0 0 34px; box-sizing: border-box; display: flex; flex-direction: column; gap: 12px; padding: 16px 0 12px; background: #808080; border-left: 1px solid #404040; }
.tab { display: grid; place-items: center; width: 27px; height: 42px; box-sizing: border-box; background: #d4d0c8; border: 1px solid; border-color: #fff #404040 #404040 #d4d0c8; border-radius: 0 4px 4px 0; }
.tab svg { width: 24px; height: 24px; }
.tab.active { width: 30px; margin-left: -1px; padding-right: 2px; border-left-color: #d4d0c8; }

.selbar { display: flex; align-items: center; height: 35px; box-sizing: border-box; padding: 0 5px 5px; background: linear-gradient(#fff, #d4d0c8 31px, #fff 32px 33px, #d4d0c8 33px); }
.combo { position: relative; height: 21px; box-sizing: border-box; border: 1px solid #c8c4bc; background: #fff; }
.combo::after { content: ""; position: absolute; right: 7px; top: 8px; border: 4px solid transparent; border-top-color: #000; border-bottom: 0; pointer-events: none; }
.first { width: 143px; margin-right: 8px; }
.second { width: 151px; margin-right: 4px; }
select { appearance: none; width: 100%; height: 19px; padding: 0 20px 0 2px; border: 0; border-radius: 0; background: linear-gradient(#ece9e4, #ece9e4) right / 19px 100% no-repeat #fff; color: #000; font: inherit; line-height: 18px; }
.small { min-width: 23px; padding: 0 3px; }
.small svg { width: 17px; height: 17px; }
.selbar .drop { width: 10px; }
.end { margin-left: auto; }

.meter { position: absolute; right: 62px; bottom: 9px; display: flex; align-items: center; width: 119px; height: 60px; color: #fff; }
.dial { position: relative; width: 60px; height: 60px; border-radius: 50%; background: #4c4f60; box-shadow: 0 1px 3px #0006; text-align: center; font: 300 25px/58px Lato, sans-serif; }
.dial svg { position: absolute; inset: 0; width: 60px; height: 60px; fill: none; stroke-width: 2; }
.dial small { font-size: 12px; }
.rates { position: absolute; right: 0; width: 96px; height: 42px; padding-left: 44px; box-sizing: border-box; border-radius: 0 21px 21px 0; background: #2f323c; font: 13px/21px "Liberation Sans", sans-serif; }
.rates div { display: flex; justify-content: space-between; padding-right: 8px; }
.rates b { margin-left: -6px; font-size: 12px; }
.rates small { color: #a8aab0; font-size: 10px; }
.up { color: #3ab0f0; }
.down { color: #2fc04a; }

.watermark { position: absolute; right: 24px; bottom: 14px; display: flex; align-items: flex-start; width: 259px; height: 82px; opacity: .6; color: #fff; pointer-events: none; }
.watermark svg { width: 72px; height: 82px; margin-right: 7px; }
.name { padding-top: 14px; font-weight: bold; font-size: 40px; line-height: 40px; white-space: nowrap; }
.name span { font-family: "Liberation Sans", sans-serif; font-size: 46px; }
.url { font: bold 16px/24px "DejaVu Sans", sans-serif; opacity: .8; }
</style>
